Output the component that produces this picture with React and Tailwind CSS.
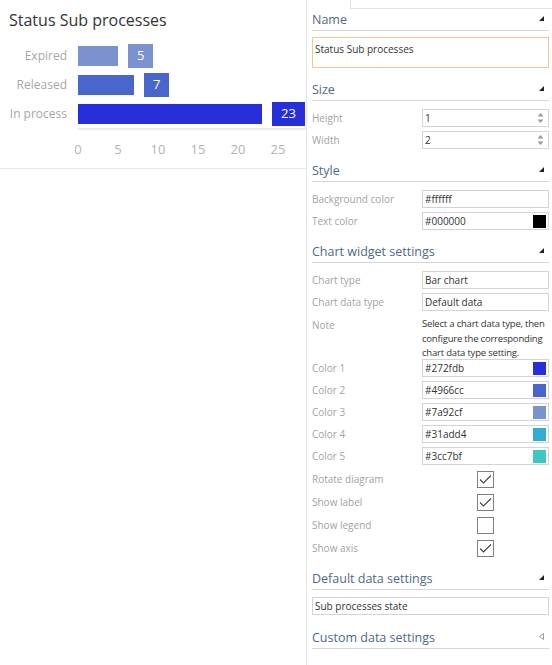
import React from "react";

const bars = [
  { label: "Expired", value: 5, color: "#7a92cf" },
  { label: "Released", value: 7, color: "#4966cc" },
  { label: "In process", value: 23, color: "#272fdb" },
];

const ticks = [0, 5, 10, 15, 20, 25];

function Collapse() {
  return (
    <svg width="5" height="5" viewBox="0 0 5 5" className="mt-[-3px]">
      <path d="M5 0 L5 5 L0 5 Z" fill="#222" />
    </svg>
  );
}

function Expand() {
  return (
    <svg width="5" height="7" viewBox="0 0 5 7" className="mt-[-3px]">
      <path d="M4.5 0.5 L4.5 6.5 L0.5 3.5 Z" fill="none" stroke="#999" strokeWidth="1" />
    </svg>
  );
}

function Header({ title, open = true, className = "" }) {
  return (
    <div
      className={`h-[22px] flex items-center justify-between border-b border-[#d6d6d6] pr-[5px] ${className}`}
    >
      <span className="text-[12.5px] leading-[20px] text-[#4f6a88]">{title}</span>
      {open ? <Collapse /> : <Expand />}
    </div>
  );
}

function Row({ label, children }) {
  return (
    <div className="flex items-center h-[18px]">
      <div className="w-[110px] text-[10px] text-[#a3a3a3]">{label}</div>
      <div className="flex-1">{children}</div>
    </div>
  );
}

function Field({ value, swatch, spinner }) {
  return (
    <div className="h-[18px] border border-[#d4d4d4] bg-white flex items-center pl-[2px] pr-[2px] text-[10px] text-[#333]">
      <span className="flex-1">{value}</span>
      {swatch && <span className="w-[13px] h-[13px]" style={{ background: swatch }} />}
      {spinner && (
        <svg width="7" height="12" viewBox="0 0 7 12" className="mr-[2px]">
          <path d="M3.5 1 L6.5 4.5 L0.5 4.5 Z" fill="#999" />
          <path d="M3.5 11 L6.5 7.5 L0.5 7.5 Z" fill="#999" />
        </svg>
      )}
    </div>
  );
}

function Check({ checked }) {
  return (
    <div className="w-[17px] h-[17px] border border-[#808080] bg-white flex items-center justify-center">
      {checked && (
        <svg width="13" height="11" viewBox="0 0 13 11">
          <path d="M1 5.5 L4.5 9 L12 1.5" fill="none" stroke="#444" strokeWidth="1.1" />
        </svg>
      )}
    </div>
  );
}

function CheckRow({ label, checked }) {
  return (
    <div className="flex items-center h-[23px]">
      <div className="w-[110px] text-[10px] text-[#a3a3a3]">{label}</div>
      <div className="flex-1 flex justify-center">
        <Check checked={checked} />
      </div>
    </div>
  );
}

export default function App() {
  return (
    <div
      className="w-[552px] h-[665px] bg-white flex overflow-hidden"
      style={{ fontFamily: '"Open Sans", "Noto Sans", sans-serif' }}
    >
      {/* chart widget */}
      <div className="w-[307px] shrink-0 border-r border-[#e6e6e6]">
        <div className="border-b border-[#e8e8e8] h-[169px]">
          <div className="pl-[9px] pt-[8px] h-[32px] text-[16px] leading-[24px] text-[#333]">
            Status Sub processes
          </div>
          <div className="mt-[9px]">
            {bars.map((b) => (
              <div key={b.label} className="flex items-center h-[29px]">
                <div className="w-[67px] text-right text-[12px] text-[#a6a6a6]">{b.label}</div>
                <div className="ml-[11px] flex items-center">
                  <div className="h-[20px]" style={{ width: b.value * 8, background: b.color }} />
                  <div
                    className="ml-[10px] h-[24px] px-[9px] flex items-center text-[13px] text-white"
                    style={{ background: b.color }}
                  >
                    {b.value}
                  </div>
                </div>
              </div>
            ))}
          </div>
          <div className="ml-[78px] border-t-2 border-[#ececec]" />
          <div className="flex pl-[58px] mt-[9px]">
            {ticks.map((t) => (
              <div key={t} className="w-[40px] text-center text-[13px] leading-[20px] text-[#b3b3b3]">
                {t}
              </div>
            ))}
          </div>
        </div>
      </div>

      {/* properties panel */}
      <div className="flex-1 flex flex-col">
        <div className="flex h-[9px]">
          <div className="w-[43px]" />
          <div className="flex-1 border-l border-b border-[#e3e3e3]" />
        </div>
        <div className="pl-[5px] pr-[3px]">
          <Header title="Name" />
          <div className="mt-[6px] h-[31px] border border-[#f6c597] px-[2px] pt-[4px] text-[10px] text-[#333]">
            Status Sub processes
          </div>

          <Header title="Size" className="mt-[11px]" />
          <div className="mt-[8px] flex flex-col gap-[4px]">
            <Row label="Height">
              <Field value="1" spinner />
            </Row>
            <Row label="Width">
              <Field value="2" spinner />
            </Row>
          </div>

          <Header title="Style" className="mt-[11px]" />
          <div className="mt-[8px] flex flex-col gap-[4px]">
            <Row label="Background color">
              <Field value="#ffffff" />
            </Row>
            <Row label="Text color">
              <Field value="#000000" swatch="#000000" />
            </Row>
          </div>

          <Header title="Chart widget settings" className="mt-[11px]" />
          <div className="mt-[8px] flex flex-col gap-[4px]">
            <Row label="Chart type">
              <Field value="Bar chart" />
            </Row>
            <Row label="Chart data type">
              <Field value="Default data" />
            </Row>
            <div className="flex h-[40px]">
              <div className="w-[110px] text-[10px] text-[#a3a3a3] pt-[3px]">Note</div>
              <div className="flex-1 pt-[2px] text-[9.5px] tracking-[-0.2px] leading-[14.5px] text-[#333] whitespace-nowrap mr-[-3px]">
                Select a chart data type, then
                <br />
                configure the corresponding
                <br />
                chart data type setting.
              </div>
            </div>
            <Row label="Color 1">
              <Field value="#272fdb" swatch="#272fdb" />
            </Row>
            <Row label="Color 2">
              <Field value="#4966cc" swatch="#4966cc" />
            </Row>
            <Row label="Color 3">
              <Field value="#7a92cf" swatch="#7a92cf" />
            </Row>
            <Row label="Color 4">
              <Field value="#31add4" swatch="#31add4" />
            </Row>
            <Row label="Color 5">
              <Field value="#3cc7bf" swatch="#3cc7bf" />
            </Row>
          </div>
          <div className="mt-[3px]">
            <CheckRow label="Rotate diagram" checked />
            <CheckRow label="Show label" checked />
            <CheckRow label="Show legend" />
            <CheckRow label="Show axis" checked />
          </div>

          <Header title="Default data settings" className="mt-[8px]" />
          <div className="mt-[7px]">
            <Field value="Sub processes state" />
          </div>

          <Header title="Custom data settings" open={false} className="mt-[12px]" />
        </div>
      </div>
    </div>
  );
}
